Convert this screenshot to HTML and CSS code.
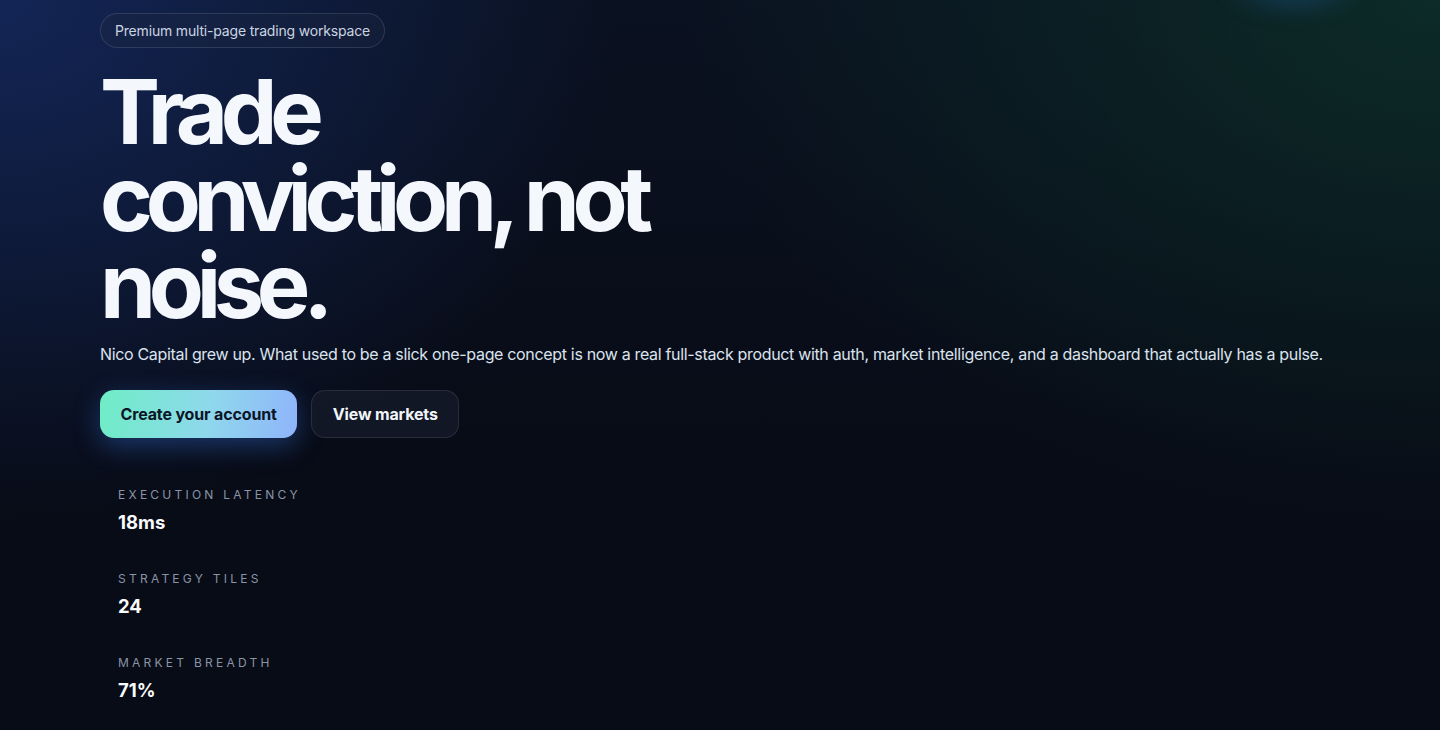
FILE: index.html
```html
<!DOCTYPE html>
<html lang="en">
<head>
<meta charset="utf-8">
<title>Nico Capital</title>
<link rel="stylesheet" href="styles.css">
</head>
<body>
<div class="glow glow-top"></div>
<main class="hero">
  <span class="badge">Premium multi-page trading workspace</span>
  <h1 class="title">Trade conviction, not noise.</h1>
  <p class="lede">Nico Capital grew up. What used to be a slick one-page concept is now a real full-stack product with auth, market intelligence, and a dashboard that actually has a pulse.</p>
  <div class="actions">
    <a class="btn btn-primary" href="#">Create your account</a>
    <a class="btn btn-ghost" href="#">View markets</a>
  </div>
  <div class="stats">
    <div class="stat">
      <div class="stat-label">Execution latency</div>
      <div class="stat-value">18ms</div>
    </div>
    <div class="stat">
      <div class="stat-label">Strategy tiles</div>
      <div class="stat-value">24</div>
    </div>
    <div class="stat">
      <div class="stat-label">Market breadth</div>
      <div class="stat-value">71%</div>
    </div>
  </div>
</main>
</body>
</html>
```

FILE: styles.css
```css
* { box-sizing: border-box; }
html, body { margin: 0; padding: 0; }
body {
  min-height: 730px;
  font-family: Inter, "Noto Sans", sans-serif;
  color: #f1f5f9;
  background-color: #080c16;
  background-image:
    radial-gradient(ellipse 620px 520px at 0px 0px, rgba(22, 44, 104, 0.75), rgba(22, 44, 104, 0) 100%),
    radial-gradient(ellipse 760px 520px at 1440px 0px, rgba(14, 60, 44, 0.6), rgba(14, 60, 44, 0) 100%),
    linear-gradient(180deg, #0a1120 0%, #080c17 60%, #080c16 100%);
  overflow: hidden;
}
.glow {
  position: absolute;
  pointer-events: none;
}
.glow-top {
  left: 1220px;
  top: -40px;
  width: 150px;
  height: 60px;
  border-radius: 50%;
  background: radial-gradient(ellipse at center, rgba(30, 90, 150, 0.45), rgba(30, 90, 150, 0) 70%);
  filter: blur(8px);
}
.hero {
  padding: 13px 0 0 100px;
  display: flex;
  flex-direction: column;
  align-items: flex-start;
}
.badge {
  display: inline-flex;
  align-items: center;
  height: 35px;
  padding: 0 14px;
  border: 1px solid rgba(148, 163, 184, 0.2);
  border-radius: 999px;
  background: rgba(30, 41, 66, 0.35);
  color: #cbd5e1;
  font-size: 14px;
  letter-spacing: -0.18px;
}
.title {
  margin: 20px 0 0 0;
  max-width: 600px;
  font-size: 90px;
  line-height: 87px;
  font-weight: 700;
  letter-spacing: -0.081em;
  color: #f4f7fc;
}
.lede {
  margin: 12px 0 0 0;
  font-size: 16px;
  line-height: 26px;
  letter-spacing: -0.33px;
  color: #dbe3ee;
}
.actions {
  display: flex;
  gap: 14px;
  margin-top: 23px;
}
.btn {
  display: inline-flex;
  align-items: center;
  justify-content: center;
  height: 48px;
  padding: 0 20.5px;
  border-radius: 14px;
  font-size: 16px;
  font-weight: 700;
  letter-spacing: -0.15px;
  text-decoration: none;
}
.btn-primary {
  color: #0b1526;
  background: linear-gradient(100deg, #6eedc5 0%, #8fd8ec 55%, #8fb4fb 100%);
  box-shadow: 0 8px 26px rgba(59, 130, 246, 0.35);
}
.btn-ghost {
  color: #f1f5f9;
  background: rgba(20, 26, 40, 0.85);
  border: 1px solid rgba(148, 163, 184, 0.16);
}
.stats {
  display: flex;
  flex-direction: column;
  gap: 35px;
  margin-top: 49px;
  padding-left: 18px;
}
.stat {
  display: flex;
  flex-direction: column;
  gap: 5px;
}
.stat-label {
  font-size: 12px;
  line-height: 16px;
  letter-spacing: 0.27em;
  text-transform: uppercase;
  color: #8a94a6;
}
.stat-value {
  font-size: 18.5px;
  line-height: 28px;
  font-weight: 700;
  color: #f8fafc;
}
```
